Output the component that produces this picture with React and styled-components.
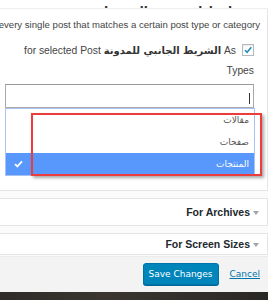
import React from 'react'
import styled, { createGlobalStyle } from 'styled-components'

const GlobalStyle = createGlobalStyle`
  html, body { margin: 0; padding: 0; background: #fff; }
  body { font-family: "Liberation Sans", Arial, sans-serif; }
`

const Page = styled.div`
  width: 268px;
  height: 300px;
  overflow: hidden;
  direction: rtl;
  background: #fbfbfb;
  font-family: "Liberation Sans", "DejaVu Sans", sans-serif;
  color: #444;
  display: flex;
  flex-direction: column;
`

const TopStrip = styled.div`
  height: 8px;
  flex-shrink: 0;
  overflow: hidden;
  background: #fff;
  border-bottom: 1px solid #eee;
  display: flex;
  align-items: flex-end;
  padding-right: 36px;
  font-size: 12px;
  font-weight: bold;
  color: #333;
  line-height: 12px;
  & span { transform: translateY(9px); }
`

const Section = styled.div`
  position: relative;
  flex-shrink: 0;
  background: #fff;
  margin-left: -20px;
  width: 285px;
  border-right: 1px solid #e5e5e5;
  border-bottom: 1px solid #e5e5e5;
  padding: 8px 13px 14px 0;
  box-sizing: border-box;
`

const Desc = styled.div`
  font-size: 9.6px;
  line-height: 16px;
  white-space: nowrap;
  margin-right: -6px;
  color: #444;
`

const Label = styled.label`
  display: block;
  margin-top: 8px;
  font-size: 10.3px;
  line-height: 20px;
  padding-left: 28px;
  color: #444;
  & b { font-family: "DejaVu Sans", sans-serif; font-size: 10px; color: #333; }
`

const Check = styled.span`
  display: inline-block;
  width: 10px;
  height: 10px;
  border: 1px solid #b4b9be;
  background: #fff;
  box-shadow: inset 0 1px 2px rgba(0,0,0,.1);
  vertical-align: -2px;
  margin-left: 6px;
  position: relative;
  & svg { position: absolute; left: 0; top: 0; }
`

const SelectBox = styled.div`
  margin-top: 3px;
  margin-left: 22px;
  height: 24px;
  box-sizing: border-box;
  border: 1px solid #aaa;
  border-top-color: #999;
  background: #fff;
  display: flex;
  align-items: center;
  padding-right: 3px;
  & i { display: block; width: 1px; height: 11px; background: #333; margin-top: 4px; }
`

const Dropdown = styled.div`
  margin-left: 22px;
  margin-right: -1px;
  border: 1px solid #a6c3f4;
  border-top-color: #a6c3f4;
  background: #fff;
`

const Option = styled.div`
  height: 22px;
  display: flex;
  align-items: center;
  justify-content: space-between;
  padding: 0 5px 0 8px;
  font-family: "DejaVu Sans", sans-serif;
  font-size: 9px;
  color: ${p => (p.selected ? '#fff' : '#555')};
  background: ${p => (p.selected ? '#5897fb' : '#fff')};
`

const Highlight = styled.div`
  position: absolute;
  left: 48px;
  top: 104px;
  width: 231px;
  height: 63px;
  box-sizing: border-box;
  border: 2px solid #ee3b3b;
  box-shadow: 2px 2px 3px rgba(0,0,0,.35);
  pointer-events: none;
`

const Box = styled.div`
  flex-shrink: 0;
  margin-top: 7px;
  margin-left: -20px;
  width: 285px;
  box-sizing: border-box;
  background: #fff;
  border: 1px solid #e5e5e5;
  height: ${p => p.h}px;
  direction: ltr;
  display: flex;
  align-items: center;
  justify-content: flex-end;
  padding-right: 8px;
  font-size: 10.5px;
  font-weight: bold;
  color: #23282d;
`

const Arrow = styled.span`
  display: inline-block;
  width: 0;
  height: 0;
  border-left: 3px solid transparent;
  border-right: 3px solid transparent;
  border-top: 4px solid #a0a5aa;
  margin-left: 3px;
  margin-top: 2px;
`

const Footer = styled.div`
  flex-shrink: 0;
  margin-top: 1px;
  background: #f3f3f3;
  height: 36px;
  direction: ltr;
  display: flex;
  align-items: center;
  justify-content: flex-end;
  gap: 11px;
  padding-right: 8px;
  padding-bottom: 2px;
  box-sizing: border-box;
  border-top: 1px solid #ececec;
`

const SaveButton = styled.button`
  width: 76px;
  height: 22px;
  background: #0085ba;
  border: 1px solid #0073aa;
  border-radius: 3px;
  box-shadow: 0 1px 0 #006799;
  color: #fff;
  font-family: "DejaVu Sans", sans-serif;
  font-size: 9px;
  padding: 0;
`

const CancelLink = styled.a`
  color: #0073aa;
  text-decoration: underline;
  font-family: "DejaVu Sans", sans-serif;
  font-size: 9px;
`

const DarkBar = styled.div`
  flex: 1;
  background: linear-gradient(90deg, #2e2b28, #3a3530 40%, #2a2826);
`

const options = [
  { label: 'مقالات' },
  { label: 'صفحات' },
  { label: 'المنتجات', selected: true },
]

const App = () => {
  return (
    <Page>
      <GlobalStyle />
      <TopStrip><span>إعدادات عرض الشريط</span></TopStrip>
      <Section>
        <Desc><span dir="ltr">every single post that matches a certain post type or category</span></Desc>
        <Label>
          <Check>
            <svg width="10" height="10" viewBox="0 0 10 10">
              <path d="M2 5.2 L4.1 7.3 L8.3 2.2" fill="none" stroke="#1e8cbe" strokeWidth="1.6" />
            </svg>
          </Check>
          As <b>الشريط الجانبي للمدونة</b> for selected Post Types
        </Label>
        <SelectBox><i /></SelectBox>
        <Dropdown>
          {options.map(o => (
            <Option key={o.label} selected={o.selected}>
              <span>{o.label}</span>
              {o.selected && (
                <svg width="9" height="8" viewBox="0 0 9 8">
                  <path d="M1 4.2 L3.4 6.4 L8 1.4" fill="none" stroke="#fff" strokeWidth="1.8" />
                </svg>
              )}
            </Option>
          ))}
        </Dropdown>
        <Highlight />
      </Section>
      <Box h={28}>For Archives<Arrow /></Box>
      <Box h={22}>For Screen Sizes<Arrow /></Box>
      <Footer>
        <SaveButton>Save Changes</SaveButton>
        <CancelLink>Cancel</CancelLink>
      </Footer>
      <DarkBar />
    </Page>
  )
}

export default App
